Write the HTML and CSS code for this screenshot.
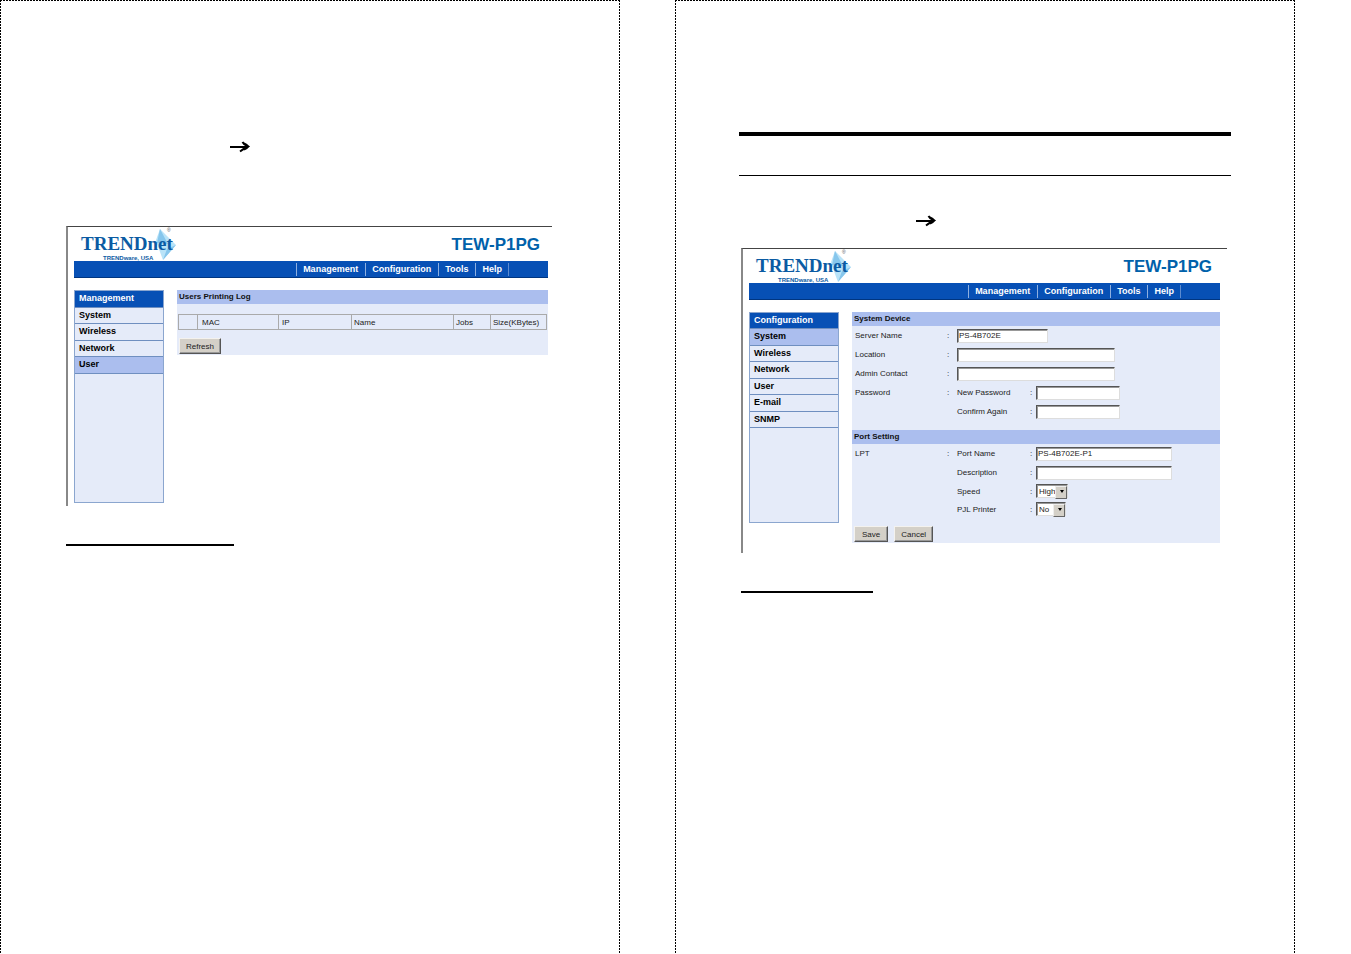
FILE: index.html
```html
<!DOCTYPE html>
<html lang="en">
  <head>
    <title>TEW-P1PG</title>
    <meta charset="UTF-8">
    <meta name="viewport" content="width=device-width, initial-scale=1.0">
    <link rel="stylesheet" href="styles.css">
  </head>
  <body>
    <section class="page page-left">
      <svg class="arrow" viewBox="0 0 20 14" aria-hidden="true">
        <path d="M0 7H17" />
        <path d="M12.500 2Q14 5 18 6.500Q14 8.500 10 11.500" />
        <path d="M14 3.500Q17 4.500 18 6.500Q17 8.500 14 9.500" />
      </svg>

      <div class="screen screen-user">
        <header class="top">
          <svg class="logo" viewBox="0 0 100 34" role="img" aria-label="TRENDnet">
            <path class="star-light" d="M82 2L98 18L85 33L82 25L78 13Z" />
            <path class="star-dark" d="M82 2L90 17L79 16ZM98 18L85 33L89 22Z" />
            <text class="logo-name" x="3" y="23">TRENDnet</text>
            <text class="logo-sub" x="25" y="33">TRENDware, USA</text>
            <text class="logo-mark" x="89" y="5">®</text>
          </svg>
          <h1>TEW-P1PG</h1>
        </header>
        <nav class="menu">
          <a href="#">Management</a>
          <a href="#">Configuration</a>
          <a href="#">Tools</a>
          <a href="#">Help</a>
        </nav>
        <div class="columns">
          <aside class="sidebar">
            <div class="side-list side-management">
              <h2>Management</h2>
              <a href="#">System</a>
              <a href="#">Wireless</a>
              <a href="#">Network</a>
              <a href="#" class="active">User</a>
            </div>
          </aside>
          <main class="panel">
            <h3>Users Printing Log</h3>
            <table class="log">
              <tr>
                <th class="col-mark"></th>
                <th class="col-mac">MAC</th>
                <th class="col-ip">IP</th>
                <th class="col-name">Name</th>
                <th class="col-jobs">Jobs</th>
                <th class="col-size">Size(KBytes)</th>
              </tr>
            </table>
            <div class="buttons">
              <button type="button">Refresh</button>
            </div>
          </main>
        </div>
      </div>
      <hr class="underline underline-user">
    </section>

    <section class="page page-right">
      <hr class="rule-thick">
      <hr class="rule-thin">
      <svg class="arrow" viewBox="0 0 20 14" aria-hidden="true">
        <path d="M0 7H17" />
        <path d="M12.500 2Q14 5 18 6.500Q14 8.500 10 11.500" />
        <path d="M14 3.500Q17 4.500 18 6.500Q17 8.500 14 9.500" />
      </svg>

      <div class="screen screen-system">
        <header class="top">
          <svg class="logo" viewBox="0 0 100 34" role="img" aria-label="TRENDnet">
            <path class="star-light" d="M82 2L98 18L85 33L82 25L78 13Z" />
            <path class="star-dark" d="M82 2L90 17L79 16ZM98 18L85 33L89 22Z" />
            <text class="logo-name" x="3" y="23">TRENDnet</text>
            <text class="logo-sub" x="25" y="33">TRENDware, USA</text>
            <text class="logo-mark" x="89" y="5">®</text>
          </svg>
          <h1>TEW-P1PG</h1>
        </header>
        <nav class="menu">
          <a href="#">Management</a>
          <a href="#">Configuration</a>
          <a href="#">Tools</a>
          <a href="#">Help</a>
        </nav>
        <div class="columns">
          <aside class="sidebar">
            <div class="side-list side-configuration">
              <h2>Configuration</h2>
              <a href="#" class="active">System</a>
              <a href="#">Wireless</a>
              <a href="#">Network</a>
              <a href="#">User</a>
              <a href="#">E-mail</a>
              <a href="#">SNMP</a>
            </div>
          </aside>
          <form class="panel">
            <h3>System Device</h3>
            <div class="fields">
              <label for="server-name">Server Name</label>
              <span>:</span>
              <div class="wide"><input type="text" id="server-name" class="short" value="PS-4B702E"></div>

              <label for="location">Location</label>
              <span>:</span>
              <div class="wide"><input type="text" id="location" class="long"></div>

              <label for="contact">Admin Contact</label>
              <span>:</span>
              <div class="wide"><input type="text" id="contact" class="long"></div>

              <span>Password</span>
              <span>:</span>
              <label for="password">New Password</label>
              <span>:</span>
              <input type="password" id="password" class="secret">

              <label for="confirm" class="sub">Confirm Again</label>
              <span>:</span>
              <input type="password" id="confirm" class="secret">
            </div>
            <h3>Port Setting</h3>
            <div class="fields port-fields">
              <span>LPT</span>
              <span>:</span>
              <label for="port-name">Port Name</label>
              <span>:</span>
              <input type="text" id="port-name" class="port" value="PS-4B702E-P1">

              <label for="description" class="sub">Description</label>
              <span>:</span>
              <input type="text" id="description" class="port">

              <label for="speed" class="sub">Speed</label>
              <span>:</span>
              <div class="select">
                <select id="speed"><option>High</option></select>
              </div>

              <label for="pjl" class="sub">PJL Printer</label>
              <span>:</span>
              <div class="select">
                <select id="pjl"><option>No</option></select>
              </div>
            </div>
            <div class="buttons">
              <button type="submit">Save</button>
              <button type="reset">Cancel</button>
            </div>
          </form>
        </div>
      </div>
      <hr class="underline underline-system">
    </section>
  </body>
</html>
```

FILE: styles.css
```css
* {
  box-sizing: border-box;
}
body {
  display: flex;
  gap: 55px;
  min-height: 100vh;
  margin: 0;
  padding-right: 56px;
  background: #fff;
  color: #222;
  font-family: "Liberation Sans", Arial, sans-serif;
  font-size: 8px;
}
h1, h2, h3, hr {
  margin: 0;
}
hr {
  border: none;
  background: #000;
}
/* dotted outline on the top and both sides */
.page {
  flex: 1;
  min-width: 0;
  padding: 0 64px;
  background:
    repeating-linear-gradient(90deg, #000 0 2px, #fff 2px 3px) top / 100% 1px no-repeat,
    repeating-linear-gradient(#000 0 2px, #fff 2px 3px) left / 1px 100% no-repeat,
    repeating-linear-gradient(#000 0 2px, #fff 2px 3px) right / 1px 100% no-repeat;
}
.page-left {
  padding-top: 140px;
}
.page-right {
  padding-top: 132px;
}
.rule-thick {
  height: 4px;
}
.rule-thin {
  height: 1px;
  margin: 39px 0 38px;
}
.arrow {
  display: block;
  width: 20px;
  height: 14px;
  fill: none;
  stroke: #000;
  stroke-width: 2;
}
.page-left .arrow {
  margin: 0 0 72px 166px;
}
.page-right .arrow {
  margin: 0 0 20px 177px;
}
.underline {
  height: 2px;
  margin: 38px 0 0 2px;
}
.underline-user {
  width: 168px;
}
.underline-system {
  width: 132px;
}

.screen {
  margin: 0 4px 0 2px;
  border-top: 1px solid #444;
  border-left: 2px solid #888;
}
.screen-user {
  padding: 0 4px 3px 6px;
}
.screen-system {
  padding: 0 7px 10px 6px;
}
.top {
  display: flex;
  justify-content: space-between;
  height: 34px;
  padding: 0 8px 0 4px;
}
.logo {
  width: 100px;
  height: 34px;
}
.logo-name {
  fill: #0b5ba3;
  font-family: "Liberation Serif", "Times New Roman", serif;
  font-size: 19px;
  font-weight: bold;
}
.logo-sub {
  fill: #0b5ba3;
  font-size: 6px;
  font-weight: bold;
}
.logo-mark {
  fill: #555;
  font-size: 5px;
}
.star-light {
  fill: #b9e3f8;
}
.star-dark {
  fill: #86c6ec;
}
h1 {
  color: #0061aa;
  font-size: 17px;
  line-height: 36px;
}
.menu {
  display: flex;
  justify-content: flex-end;
  align-items: center;
  height: 17px;
  padding-right: 39px;
  border-bottom: 1px solid #003580;
  background: #0750b5;
}
.menu a {
  padding: 0 7px 0 6px;
  border-left: 1px solid #8fb0e0;
  color: #fff;
  font-size: 9px;
  font-weight: bold;
  line-height: 13px;
  text-decoration: none;
}
.menu a:last-child {
  padding-right: 6px;
  border-right: 1px solid #5c8bd0;
}
.columns {
  display: flex;
  align-items: flex-start;
  gap: 13px;
  padding-top: 12px;
}
.sidebar {
  width: 90px;
  border: 1px solid #8ba6cf;
  background: #e5ebf9;
}
.screen-user .sidebar {
  min-height: 213px;
}
.screen-system .sidebar {
  min-height: 211px;
}
.side-list {
  display: grid;
  grid-auto-rows: 1fr;
}
.side-management {
  height: 83px;
}
.side-configuration {
  height: 115px;
}
.side-list h2,
.side-list a {
  padding-left: 4px;
  border-bottom: 1px solid #6f8fc0;
  color: #000;
  font-size: 9px;
  font-weight: bold;
  line-height: 15px;
  text-decoration: none;
}
.side-list h2 {
  background: #0750b5;
  color: #fff;
}
.side-list .active {
  background: #abbeee;
}

.panel {
  flex: 1;
  min-width: 0;
  background: #e5ebf9;
}
h3 {
  padding-left: 2px;
  background: #abbeee;
  color: #111;
  font-size: 8px;
  line-height: 14px;
}
.log {
  width: calc(100% - 2px);
  margin: 10px 0 8px 1px;
  border: 1px solid #aaa;
  border-collapse: collapse;
  table-layout: fixed;
}
.log th {
  height: 15px;
  padding: 0 0 0 2px;
  border: 1px solid #aaa;
  font-weight: normal;
  line-height: 13px;
  text-align: left;
}
.col-mark {
  width: 19px;
}
.log .col-mac {
  width: 81px;
  padding-left: 4px;
}
.log .col-ip {
  width: 73px;
  padding-left: 3px;
}
.col-jobs {
  width: 37px;
}
.col-size {
  width: 56px;
}
.buttons {
  display: flex;
  gap: 6px;
  padding: 0 2px 1px;
}
button {
  height: 16px;
  padding: 0 6px;
  border: 1px solid;
  border-color: #f4f2ee #555 #555 #f4f2ee;
  background: #d4d0c8;
  box-shadow: inset -1px -1px #999;
  color: #222;
  font-family: inherit;
  font-size: 8px;
}
button[type="submit"] {
  padding: 0 7px;
}

.fields {
  display: grid;
  grid-template-columns: 92px 10px 73px 6px 1fr;
  grid-auto-rows: 19px;
  align-items: center;
  padding: 0 3px 9px;
}
.port-fields {
  grid-template-rows: 19px 19px 18px 18px;
  padding-bottom: 8px;
}
.wide {
  grid-column: 3 / -1;
}
.sub {
  grid-column: 3;
}
input,
.select {
  height: 14px;
  border: 1px solid;
  border-color: #555 #ddd #ddd #555;
  background: #fff;
  box-shadow: inset 1px 1px #999;
}
input {
  display: block;
  padding: 0 1px;
  color: #222;
  font-family: inherit;
  font-size: 8px;
}
.short {
  width: 91px;
}
.long {
  width: 158px;
}
.secret {
  width: 84px;
}
.port {
  width: 136px;
}
.select {
  display: flex;
  position: relative;
  justify-self: start;
  min-width: 30px;
}
select {
  flex: 1;
  padding: 0 11px 0 2px;
  border: none;
  background: none;
  color: #222;
  font-family: inherit;
  font-size: 8px;
  appearance: none;
}
/* drop-down button and its triangle */
.select::before {
  content: "";
  position: absolute;
  top: 1px;
  right: 0;
  width: 10px;
  height: 11px;
  border: 1px solid;
  border-color: #eee #666 #666 #eee;
  background: #d4d0c8;
  pointer-events: none;
}
.select::after {
  content: "";
  position: absolute;
  top: 5px;
  right: 3px;
  border: 2px solid transparent;
  border-top: 3px solid #000;
  border-bottom: none;
  pointer-events: none;
}
```
